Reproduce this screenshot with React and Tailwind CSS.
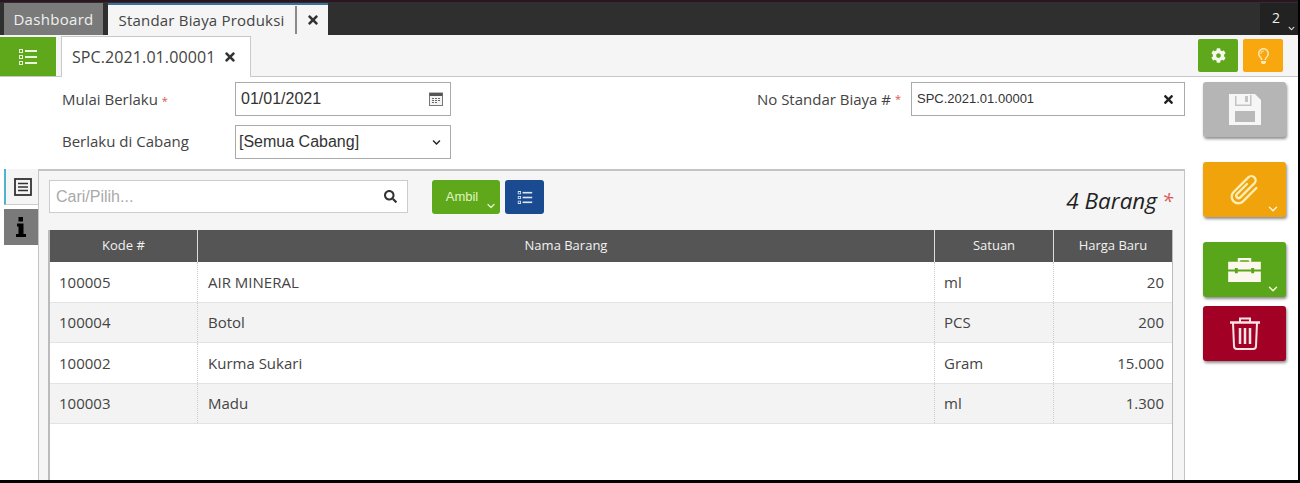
import React from 'react';
import { FaTimes, FaSearch, FaCog, FaRegLightbulb, FaChevronDown } from 'react-icons/fa';
import { ChevronDown } from 'lucide-react';

const rows = [
  { kode: '100005', nama: 'AIR MINERAL', satuan: 'ml', harga: '20' },
  { kode: '100004', nama: 'Botol', satuan: 'PCS', harga: '200' },
  { kode: '100002', nama: 'Kurma Sukari', satuan: 'Gram', harga: '15.000' },
  { kode: '100003', nama: 'Madu', satuan: 'ml', harga: '1.300' },
];

const ListIcon = ({ className }) => (
  <svg viewBox="0 0 20 18" className={className} fill="currentColor">
    <path d="M1 1h4v4H1zM2 2v2h2V2zM1 7h4v4H1zM2 8v2h2V8zM1 13h4v4H1zM2 14v2h2v-2z" fillRule="evenodd" />
    <rect x="7" y="2" width="12" height="2" />
    <rect x="7" y="8" width="12" height="2" />
    <rect x="7" y="14" width="12" height="2" />
  </svg>
);

const CalendarIcon = () => (
  <svg viewBox="0 0 14 14" className="w-[14px] h-[14px]">
    <rect x="0.5" y="1" width="13" height="12.5" fill="#f3f3f3" stroke="#777" />
    <rect x="0.5" y="1" width="13" height="3" fill="#555" />
    <path d="M3 6h2v1H3zM6 6h2v1H6zM9 6h2v1H9zM3 8h2v1H3zM6 8h2v1H6zM9 8h2v1H9zM3 10h2v1H3zM6 10h2v1H6z" fill="#666" />
  </svg>
);

const SaveIcon = () => (
  <svg viewBox="0 0 32 31" className="w-[32px] h-[31px]">
    <path fill="#f6f6f6" d="M0 0h26l6 6v25H0z" />
    <path fill="#c4c4c4" d="M6 2h1.500v10H6zM6 10.500h16V12H6zM21 1h1.500v11H21zM16 2h3v6h-3z" />
    <path fill="#b9b9b9" d="M6 17h20v11H6z" />
  </svg>
);

const ClipIcon = () => (
  <svg viewBox="0 0 32 36" className="w-[32px] h-[34px] overflow-visible" fill="none" stroke="#fdeeb8" strokeWidth="2.500" strokeLinecap="round">
    <path transform="rotate(45 16 18)" d="M23 8v20a7 7 0 0 1-14 0V6a4.500 4.500 0 0 1 9 0v21a2.500 2.500 0 0 1-5 0V12" />
  </svg>
);

const ToolboxIcon = () => (
  <svg viewBox="0 0 34 26" className="w-[33px] h-[25px]" fill="#fdf8ee">
    <path d="M10 5V1h14v4h-2.500V3.500h-9V5z" />
    <path d="M0 5h34v8H27v-1.500h-3V13H10v-1.500H7V13H0z" />
    <path d="M0 15h7v2h3v-2h14v2h3v-2h7v11H0z" />
  </svg>
);

const TrashIcon = () => (
  <svg viewBox="0 0 30 33" className="w-[30px] h-[33px]" fill="none" stroke="#fbe3e8" strokeWidth="2">
    <path d="M10 5V1.500h10V5" />
    <path d="M0 5.500h30" strokeWidth="2.500" />
    <path d="M3 6l1 23a3 3 0 0 0 3 3h16a3 3 0 0 0 3-3l1-23" />
    <path d="M10 11v16M15 11v16M20 11v16" strokeWidth="2.500" />
  </svg>
);

const InfoIcon = () => (
  <svg viewBox="0 0 10 20" className="w-[10px] h-[20px]" fill="#000">
    <rect x="2.500" y="0" width="4.500" height="4.500" />
    <path d="M1 6.500h6.500V17H10v3H0v-3h2.500V9.500H1z" />
  </svg>
);

const Required = ({ className = '' }) => <span className={`text-[#d9534f] ${className}`}>*</span>;

const SideAction = ({ color, children, caret, className = '' }) => (
  <button className={`relative w-[83px] h-[55px] rounded-[3px] flex items-center justify-center shadow-[1px_2px_3px_rgba(0,0,0,0.45)] ${color} ${className}`}>
    {children}
    {caret && <ChevronDown className="absolute right-[6px] bottom-[1px] w-[14px] h-[14px] text-[#fdf3d8]" strokeWidth={2.5} />}
  </button>
);

const App = () => {
  return (
    <div className="w-[1300px] h-[483px] overflow-hidden bg-black pr-[2px] pb-[3px] text-[#333] font-['Open_Sans','Noto_Sans',sans-serif]">
      <div className="h-full bg-white flex flex-col overflow-hidden">
        {/* app tabs */}
        <div className="h-[35px] shrink-0 bg-[#2f2f2f] border-t-2 border-[#2a1520] flex items-end pl-[4px] text-[15px]">
          <div className="w-[99px] h-[32px] bg-[#7a7a7a] text-[#f0f0f0] flex items-center justify-center tracking-[0.3px]">Dashboard</div>
          <div className="ml-[5px] w-[220px] h-[32px] bg-[#f5f5f5] border-t-2 border-[#3f6f9f] flex items-center">
            <span className="w-[187px] text-center text-[#444] tracking-[0.2px] whitespace-nowrap">Standar Biaya Produksi</span>
            <span className="w-[2px] h-[28px] bg-[#8a8a8a]" />
            <span className="flex-1 flex justify-center"><FaTimes className="w-[12px] h-[14px] text-[#333]" /></span>
          </div>
          <div className="ml-auto w-[38px] h-[32px] bg-[#222] relative text-[#eee] text-[14px]">
            <span className="absolute left-[12px] top-[4px]">2</span>
            <FaChevronDown className="absolute right-[3px] bottom-[3px] w-[7px] h-[7px] text-[#ddd]" />
          </div>
        </div>

        {/* document tabs */}
        <div className="h-[42px] shrink-0 bg-[#f5f5f5] border-b border-[#c8c8c8] flex items-end">
          <div className="w-[56px] h-[39px] bg-[#5fa81c] flex items-center justify-center text-[#e8f5d8]">
            <ListIcon className="w-[20px] h-[18px]" />
          </div>
          <div className="ml-[5px] w-[190px] h-[41px] -mb-px bg-white border border-b-0 border-[#c8c8c8] flex items-center pl-[10px] text-[16px]">
            <span className="text-[#444] tracking-[0.1px]">SPC.2021.01.00001</span>
            <FaTimes className="ml-[9px] w-[12px] h-[14px] text-[#333]" />
          </div>
          <div className="ml-auto mb-[4px] mr-[15px] flex gap-[5px]">
            <button className="w-[40px] h-[33px] rounded-[2px] bg-[#5fa81c] flex items-center justify-center text-[#f4f9ec]"><FaCog className="w-[15px] h-[15px]" /></button>
            <button className="w-[40px] h-[33px] rounded-[2px] bg-[#f9a70f] flex items-center justify-center text-[#fde7b0]"><FaRegLightbulb className="w-[13px] h-[16px]" /></button>
          </div>
        </div>

        <div className="flex-1 min-h-0 flex">
          <div className="w-[1185px] shrink-0 flex flex-col">
            {/* form */}
            <div className="h-[92px] shrink-0 pt-[5px] flex text-[15px]">
              <div className="w-[451px] pl-[62px] flex flex-col gap-[9px]">
                <div className="flex items-center h-[34px]">
                  <span className="w-[173px] text-[#444]">Mulai Berlaku <Required className="text-[11px]" /></span>
                  <div className="w-[216px] h-[34px] border border-[#aaa] flex items-center justify-between pl-[5px] pr-[7px] font-['Liberation_Sans',sans-serif] text-[16px]">
                    <span>01/01/2021</span>
                    <CalendarIcon />
                  </div>
                </div>
                <div className="flex items-center h-[34px]">
                  <span className="w-[173px] text-[#444] -mt-[1px]">Berlaku di Cabang</span>
                  <div className="w-[216px] h-[34px] border border-[#aaa] flex items-center justify-between pl-[3px] pr-[9px] font-['Liberation_Sans',sans-serif] text-[16px]">
                    <span>[Semua Cabang]</span>
                    <FaChevronDown className="w-[9px] h-[9px] text-[#222]" />
                  </div>
                </div>
              </div>
              <div className="flex-1 flex justify-end items-start">
                <span className="h-[34px] flex items-center mr-[10px] text-[#444]">No Standar Biaya #&nbsp;<Required className="text-[11px]" /></span>
                <div className="w-[274px] h-[34px] border border-[#aaa] flex items-center justify-between pl-[5px] pr-[10px] font-['Liberation_Sans',sans-serif] text-[13px] text-[#333]">
                  <span>SPC.2021.01.00001</span>
                  <FaTimes className="w-[11px] h-[13px] text-[#222]" />
                </div>
              </div>
            </div>

            {/* panel */}
            <div className="flex-1 min-h-0 flex">
              <div className="w-[38px] shrink-0 pl-[4px] flex flex-col">
                <div className="h-[36px] w-[34px] bg-[#f5f5f5] border-l-2 border-[#4fb3d0] border-b border-b-[#ccc] relative flex items-center pl-[8px] text-[#333]">
                  <svg viewBox="0 0 18 18" className="w-[18px] h-[18px]" fill="none" stroke="currentColor">
                    <rect x="1" y="1" width="16" height="16" strokeWidth="1.800" />
                    <path d="M4 5.500h10M4 9h10M4 12.500h10" strokeWidth="1.500" />
                  </svg>
                </div>
                <div className="mt-[4px] h-[36px] w-[34px] bg-[#7a7a7a] flex items-center justify-center">
                  <InfoIcon />
                </div>
              </div>
              <div className="flex-1 min-w-0 bg-[#f5f5f5] border-t-2 border-x border-[#c4c4c4] border-b-0 pl-[10px] pr-[11px] pt-[9px] flex flex-col">
                {/* toolbar */}
                <div className="h-[50px] shrink-0 flex items-start">
                  <div className="w-[359px] h-[33px] bg-white border border-[#ccc] flex items-center justify-between pl-[6px] pr-[10px] text-[16px] text-[#aaa] font-['Liberation_Sans',sans-serif]">
                    <span>Cari/Pilih...</span>
                    <FaSearch className="w-[13px] h-[13px] text-[#333]" />
                  </div>
                  <button className="relative ml-[24px] w-[68px] h-[34px] rounded-[3px] bg-[#5fa81c] text-[#e2f5c0] text-[13px] pr-[8px] font-['Liberation_Sans',sans-serif]">
                    Ambil
                    <ChevronDown className="absolute right-[3px] bottom-[2px] w-[12px] h-[12px]" strokeWidth={2.5} />
                  </button>
                  <button className="ml-[5px] w-[39px] h-[34px] rounded-[3px] bg-[#1a4a8f] flex items-center justify-center text-[#dbe7f5]">
                    <ListIcon className="w-[16px] h-[15px]" />
                  </button>
                  <div className="ml-auto h-[42px] flex items-center text-[22.500px] italic text-[#222] leading-none">
                    <span>4 Barang</span>
                    <Required className="ml-[5px] text-[20px] text-[#c9302c]" />
                  </div>
                </div>

                {/* table */}
                <div className="flex-1 min-h-0 bg-white border-l-2 border-r border-[#bbb] text-[15px] -ml-px">
                  <div className="h-[32px] bg-[#555] text-[#f2f2f2] text-[13px] grid grid-cols-[148px_737px_119px_1fr] text-center">
                    <div className="flex items-center justify-center border-r border-[#ddd]">Kode #</div>
                    <div className="flex items-center justify-center border-r border-[#ddd]">Nama Barang</div>
                    <div className="flex items-center justify-center border-r border-[#ddd]">Satuan</div>
                    <div className="flex items-center justify-center">Harga Baru</div>
                  </div>
                  {rows.map((row, index) => (
                    <div key={row.kode} className={`h-[40.500px] border-b border-[#e3e3e3] grid grid-cols-[148px_737px_119px_1fr] text-[#444] ${index % 2 === 1 ? 'bg-[#f3f3f3]' : 'bg-white'}`}>
                      <div className="flex items-center pl-[9px] border-r border-dotted border-[#ccc]">{row.kode}</div>
                      <div className="flex items-center pl-[10px] border-r border-dotted border-[#ccc]">{row.nama}</div>
                      <div className="flex items-center pl-[9px] border-r border-dotted border-[#ccc]">{row.satuan}</div>
                      <div className="flex items-center justify-end pr-[8px]">{row.harga}</div>
                    </div>
                  ))}
                </div>
              </div>
            </div>
          </div>

          {/* side actions */}
          <div className="flex-1 pl-[18px] pt-[5px] flex flex-col">
            <SideAction color="bg-[#b5b5b5]"><SaveIcon /></SideAction>
            <SideAction color="bg-[#f0a30a]" caret className="mt-[25px]"><ClipIcon /></SideAction>
            <SideAction color="bg-[#5aa61a]" caret className="mt-[25px]"><ToolboxIcon /></SideAction>
            <SideAction color="bg-[#a20025]" className="mt-[9px]"><TrashIcon /></SideAction>
          </div>
        </div>
      </div>
    </div>
  );
};

export default App;
